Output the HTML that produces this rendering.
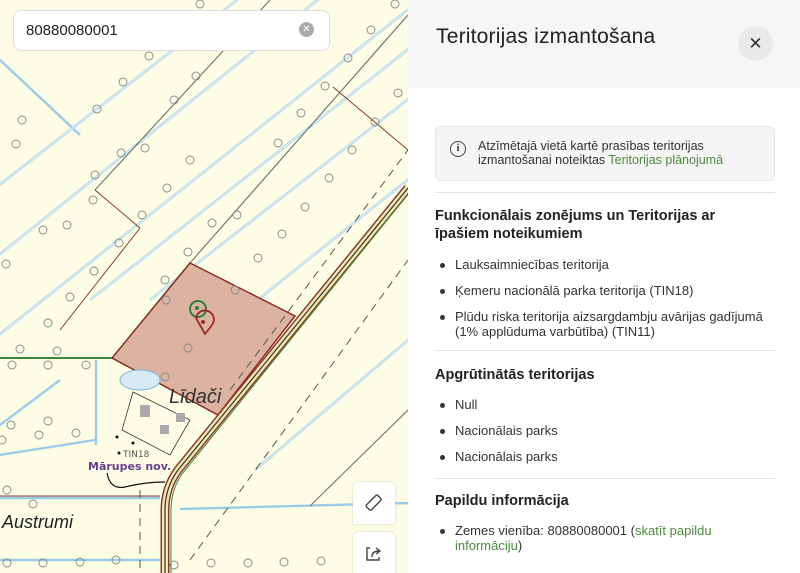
<!DOCTYPE html>
<html><head><meta charset="utf-8"><style>
*{margin:0;padding:0;box-sizing:border-box}
body{width:800px;height:573px;overflow:hidden;font-family:"Liberation Sans",sans-serif;position:relative;background:#fff}
#map{position:absolute;left:0;top:0;width:408px;height:573px;background:#fdfde6;overflow:hidden}
#panel{position:absolute;left:408px;top:0;width:392px;height:573px;background:#fff;color:#222}
.hdr{height:88px;background:#f6f6f6;position:relative}
.hdr h1{position:absolute;left:28px;top:25px;font-size:21px;font-weight:normal;color:#222;letter-spacing:0.2px}
.x{position:absolute;left:330px;top:26px;width:35px;height:35px;border-radius:50%;background:#e9e9e9;text-align:center;line-height:35px;font-size:17px;color:#333}
.info{position:absolute;left:27px;top:126px;width:340px;height:55px;background:#f5f5f5;border:1px solid #e6e6e6;border-radius:6px;font-size:12.5px;line-height:14px;color:#333;padding:12px 10px 0 42px}
.info .ic{position:absolute;left:14px;top:14px;width:16px;height:16px;border:1.5px solid #444;border-radius:50%;font-size:10px;text-align:center;line-height:13px;font-family:"Liberation Serif",serif;font-weight:bold}
.g{color:#4a8a3c}
.hr{position:absolute;left:27px;width:340px;height:1px;background:#e2e2e2}
h2{position:absolute;left:27px;width:300px;font-size:14.5px;font-weight:bold;line-height:18px;color:#222}
ul{position:absolute;left:27px;width:335px;list-style:none;font-size:13px;color:#333;line-height:15px}
li{position:relative;padding-left:20px;margin-bottom:11px}
li:before{content:"";position:absolute;left:5px;top:6px;width:5px;height:5px;border-radius:50%;background:#333}
.search{position:absolute;left:13px;top:10px;width:317px;height:41px;background:#fff;border:1px solid #ddd;border-radius:8px;font-size:15px;color:#222;padding:11px 0 0 12px}
.search .c{position:absolute;right:15px;top:11px;width:15px;height:15px;border-radius:50%;background:#aaa;color:#fff;font-size:10px;text-align:center;line-height:15px}
.btn{position:absolute;left:353px;width:42px;height:42px;background:#fff;border-radius:6px 6px 0 0;box-shadow:0 0 2px rgba(0,0,0,.2)}
</style></head><body>
<div id="map">
<svg width="408" height="573" viewBox="0 0 408 573">
<g stroke="#9ccbe6" stroke-width="2.4" fill="none">
<line x1="-20" y1="200" x2="250" y2="-10"/>
<line x1="-20" y1="270" x2="330" y2="-10"/>
<line x1="-20" y1="350" x2="420" y2="0"/>
<line x1="90" y1="300" x2="420" y2="40"/>
<line x1="150" y1="300" x2="420" y2="90"/>
<line x1="220" y1="330" x2="420" y2="170"/>
<line x1="255" y1="470" x2="420" y2="330"/>
<line x1="-20" y1="440" x2="60" y2="380"/>
<line x1="0" y1="60" x2="80" y2="135"/>
<line x1="0" y1="455" x2="95" y2="440"/>
<line x1="96" y1="360" x2="96" y2="445"/>
<line x1="0" y1="498" x2="160" y2="498"/>
<line x1="180" y1="509" x2="408" y2="503"/>
<line x1="0" y1="560" x2="160" y2="560"/>
</g>
<g stroke="#fff" stroke-width="0.8" fill="none">
<line x1="-20" y1="200" x2="250" y2="-10"/><line x1="-20" y1="270" x2="330" y2="-10"/><line x1="-20" y1="350" x2="420" y2="0"/><line x1="90" y1="300" x2="420" y2="40"/><line x1="150" y1="300" x2="420" y2="90"/><line x1="220" y1="330" x2="420" y2="170"/><line x1="255" y1="470" x2="420" y2="330"/>
</g>
<g stroke="#777" stroke-width="1.2" fill="none">
<line x1="95" y1="190" x2="270" y2="0"/>
<line x1="190" y1="263" x2="408" y2="15"/>
<line x1="310" y1="506" x2="408" y2="410"/>
</g>
<g stroke="#8b3a30" stroke-width="1" fill="none">
<line x1="95" y1="190" x2="140" y2="228"/>
<line x1="140" y1="228" x2="60" y2="330"/>
<line x1="333" y1="87" x2="408" y2="150"/>
<line x1="0" y1="496" x2="160" y2="496"/>
</g>
<polygon points="190,263 295,316 218,415 112,358" fill="#dbb3a0" stroke="#8b2a24" stroke-width="1.5"/>
<line x1="0" y1="358" x2="112" y2="358" stroke="#3a8a3c" stroke-width="2"/>
<g stroke="#555" stroke-width="1" stroke-dasharray="8,6" fill="none">
<line x1="230" y1="390" x2="408" y2="150"/>
<line x1="190" y1="560" x2="408" y2="260"/>
<line x1="140" y1="490" x2="140" y2="573"/>
</g>
<g fill="none">
<path d="M408,188 L178,470 Q165,488 165,510 L165,573" stroke="#8b3a30" stroke-width="9"/>
<path d="M408,188 L178,470 Q165,488 165,510 L165,573" stroke="#f0e8b0" stroke-width="6"/>
<path d="M408,188 L178,470 Q165,488 165,510 L165,573" stroke="#333" stroke-width="1.2"/>
<path d="M405,198 L182,474 Q171,490 171,510 L171,573" stroke="#3a8a3c" stroke-width="1"/>
</g>
<ellipse cx="140" cy="380" rx="20" ry="10" fill="#d6ebf7" stroke="#7bb5da"/>
<polygon points="133,392 190,420 170,455 122,430" fill="none" stroke="#333" stroke-width="0.8"/>
<rect x="140" y="405" width="10" height="12" fill="#aaa"/><rect x="160" y="425" width="9" height="9" fill="#aaa"/><rect x="176" y="413" width="9" height="9" fill="#aaa"/>
<path d="M107,473 Q110,490 125,487 Q145,482 165,482" stroke="#111" stroke-width="1.2" fill="none"/>
<g fill="none" stroke="#888" stroke-width="0.9">
<circle cx="200" cy="4" r="4"/><circle cx="149" cy="56" r="4"/><circle cx="123" cy="82" r="4"/><circle cx="97" cy="109" r="4"/><circle cx="22" cy="120" r="4"/><circle cx="16" cy="144" r="4"/><circle cx="121" cy="153" r="4"/><circle cx="190" cy="160" r="4"/><circle cx="174" cy="100" r="4"/><circle cx="196" cy="76" r="4"/><circle cx="145" cy="148" r="4"/><circle cx="95" cy="175" r="4"/><circle cx="167" cy="188" r="4"/><circle cx="93" cy="200" r="4"/><circle cx="67" cy="225" r="4"/><circle cx="43" cy="230" r="4"/><circle cx="142" cy="215" r="4"/><circle cx="119" cy="243" r="4"/><circle cx="212" cy="223" r="4"/><circle cx="237" cy="215" r="4"/><circle cx="188" cy="252" r="4"/><circle cx="165" cy="280" r="4"/><circle cx="94" cy="271" r="4"/><circle cx="6" cy="264" r="4"/><circle cx="258" cy="258" r="4"/><circle cx="301" cy="113" r="4"/><circle cx="348" cy="58" r="4"/><circle cx="371" cy="30" r="4"/><circle cx="278" cy="143" r="4"/><circle cx="325" cy="86" r="4"/><circle cx="375" cy="122" r="4"/><circle cx="352" cy="150" r="4"/><circle cx="329" cy="178" r="4"/><circle cx="305" cy="207" r="4"/><circle cx="282" cy="234" r="4"/><circle cx="398" cy="93" r="4"/><circle cx="395" cy="4" r="4"/><circle cx="70" cy="297" r="4"/><circle cx="48" cy="323" r="4"/><circle cx="20" cy="349" r="4"/><circle cx="57" cy="351" r="4"/><circle cx="12" cy="365" r="4"/><circle cx="48" cy="365" r="4"/><circle cx="86" cy="365" r="4"/><circle cx="11" cy="425" r="4"/><circle cx="48" cy="421" r="4"/><circle cx="39" cy="435" r="4"/><circle cx="76" cy="433" r="4"/><circle cx="2" cy="440" r="4"/><circle cx="7" cy="490" r="4"/><circle cx="33" cy="504" r="4"/><circle cx="7" cy="563" r="4"/><circle cx="43" cy="563" r="4"/><circle cx="80" cy="562" r="4"/><circle cx="116" cy="560" r="4"/><circle cx="174" cy="565" r="4"/><circle cx="211" cy="563" r="4"/><circle cx="248" cy="563" r="4"/><circle cx="284" cy="562" r="4"/><circle cx="321" cy="561" r="4"/><circle cx="166" cy="300" r="4"/><circle cx="188" cy="348" r="4"/><circle cx="165" cy="377" r="4"/><circle cx="235" cy="290" r="4"/>
</g>
<circle cx="198" cy="309" r="8" fill="none" stroke="#2e7d3a" stroke-width="2"/><circle cx="197" cy="308" r="2" fill="#2e7d3a"/>
<path d="M196,318 A9,9 0 1 1 212,325 L205,334 Z" fill="none" stroke="#9b2a24" stroke-width="1.8"/><circle cx="203" cy="322" r="2" fill="#9b2a24"/>
<text x="169" y="403" font-family="Liberation Sans" font-style="italic" font-size="20" fill="#333">Līdači</text>
<text x="2" y="528" font-family="Liberation Sans" font-style="italic" font-size="18" fill="#222">Austrumi</text>
<text x="123" y="457" font-family="DejaVu Sans" font-size="9" fill="#555">TIN18</text>
<text x="88" y="470" font-family="DejaVu Sans" font-weight="bold" font-size="11" fill="#6a3f8f">Mārupes nov.</text>
<circle cx="117" cy="437" r="1.5" fill="#111"/><circle cx="133" cy="443" r="1.5" fill="#111"/><circle cx="119" cy="453" r="1.5" fill="#111"/>
</svg>
<div class="search">80880080001<span class="c">✕</span></div>
<div class="btn" style="top:482px"><svg width="42" height="42"><g transform="rotate(-45 21 21)"><rect x="13" y="17" width="16" height="7" rx="1.5" fill="none" stroke="#444" stroke-width="1.4"/></g></svg></div>
<div class="btn" style="top:532px"><svg width="42" height="42"><path d="M17,16 H14 V28 H26 V25" fill="none" stroke="#444" stroke-width="1.4"/><path d="M19,25 Q19,19 26,19 M23,16 L27,19 L23,22" fill="none" stroke="#444" stroke-width="1.4"/></svg></div>
</div>
<div id="panel">
<div class="hdr"><h1>Teritorijas izmantošana</h1><div class="x">✕</div></div>
<div class="info"><span class="ic">i</span>Atzīmētajā vietā kartē prasības teritorijas izmantošanai noteiktas <span class="g">Teritorijas plānojumā</span></div>
<div class="hr" style="top:192px"></div>
<h2 style="top:207px">Funkcionālais zonējums un Teritorijas ar īpašiem noteikumiem</h2>
<ul style="top:257px"><li>Lauksaimniecības teritorija</li><li>Ķemeru nacionālā parka teritorija (TIN18)</li><li>Plūdu riska teritorija aizsargdambju avārijas gadījumā (1% applūduma varbūtība) (TIN11)</li></ul>
<div class="hr" style="top:350px"></div>
<h2 style="top:366px">Apgrūtinātās teritorijas</h2>
<ul style="top:397px"><li>Null</li><li>Nacionālais parks</li><li>Nacionālais parks</li></ul>
<div class="hr" style="top:478px"></div>
<h2 style="top:492px">Papildu informācija</h2>
<ul style="top:523px"><li>Zemes vienība: 80880080001 (<span class="g">skatīt papildu informāciju</span>)</li></ul>
</div>
</body></html>
